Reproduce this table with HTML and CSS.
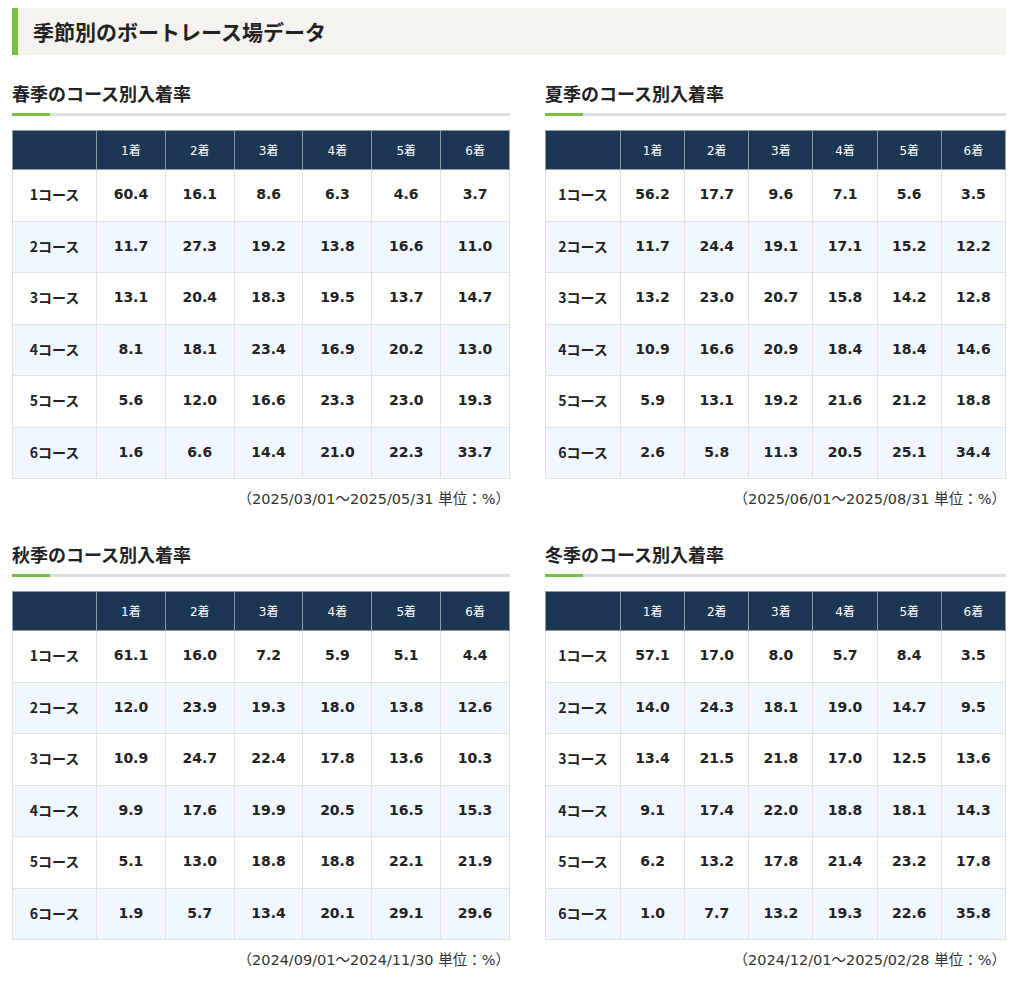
FILE: index.html
```html
<!DOCTYPE html>
<html lang="ja">
<head>
<meta charset="utf-8">
<link rel="stylesheet" href="styles.css">
</head>
<body>
<div class="page">
  <h2 class="page-title">季節別のボートレース場データ</h2>
  <div class="grid">
    <section class="season">
      <h3 class="season-title">春季のコース別入着率</h3>
      <table class="rate">
        <thead><tr><th></th><th>1着</th><th>2着</th><th>3着</th><th>4着</th><th>5着</th><th>6着</th></tr></thead>
        <tbody>
          <tr><td>1コース</td><td>60.4</td><td>16.1</td><td>8.6</td><td>6.3</td><td>4.6</td><td>3.7</td></tr>
          <tr><td>2コース</td><td>11.7</td><td>27.3</td><td>19.2</td><td>13.8</td><td>16.6</td><td>11.0</td></tr>
          <tr><td>3コース</td><td>13.1</td><td>20.4</td><td>18.3</td><td>19.5</td><td>13.7</td><td>14.7</td></tr>
          <tr><td>4コース</td><td>8.1</td><td>18.1</td><td>23.4</td><td>16.9</td><td>20.2</td><td>13.0</td></tr>
          <tr><td>5コース</td><td>5.6</td><td>12.0</td><td>16.6</td><td>23.3</td><td>23.0</td><td>19.3</td></tr>
          <tr><td>6コース</td><td>1.6</td><td>6.6</td><td>14.4</td><td>21.0</td><td>22.3</td><td>33.7</td></tr>
        </tbody>
      </table>
      <p class="note">（2025/03/01～2025/05/31 単位：%）</p>
    </section>
    <section class="season">
      <h3 class="season-title">夏季のコース別入着率</h3>
      <table class="rate">
        <thead><tr><th></th><th>1着</th><th>2着</th><th>3着</th><th>4着</th><th>5着</th><th>6着</th></tr></thead>
        <tbody>
          <tr><td>1コース</td><td>56.2</td><td>17.7</td><td>9.6</td><td>7.1</td><td>5.6</td><td>3.5</td></tr>
          <tr><td>2コース</td><td>11.7</td><td>24.4</td><td>19.1</td><td>17.1</td><td>15.2</td><td>12.2</td></tr>
          <tr><td>3コース</td><td>13.2</td><td>23.0</td><td>20.7</td><td>15.8</td><td>14.2</td><td>12.8</td></tr>
          <tr><td>4コース</td><td>10.9</td><td>16.6</td><td>20.9</td><td>18.4</td><td>18.4</td><td>14.6</td></tr>
          <tr><td>5コース</td><td>5.9</td><td>13.1</td><td>19.2</td><td>21.6</td><td>21.2</td><td>18.8</td></tr>
          <tr><td>6コース</td><td>2.6</td><td>5.8</td><td>11.3</td><td>20.5</td><td>25.1</td><td>34.4</td></tr>
        </tbody>
      </table>
      <p class="note">（2025/06/01～2025/08/31 単位：%）</p>
    </section>
    <section class="season">
      <h3 class="season-title">秋季のコース別入着率</h3>
      <table class="rate">
        <thead><tr><th></th><th>1着</th><th>2着</th><th>3着</th><th>4着</th><th>5着</th><th>6着</th></tr></thead>
        <tbody>
          <tr><td>1コース</td><td>61.1</td><td>16.0</td><td>7.2</td><td>5.9</td><td>5.1</td><td>4.4</td></tr>
          <tr><td>2コース</td><td>12.0</td><td>23.9</td><td>19.3</td><td>18.0</td><td>13.8</td><td>12.6</td></tr>
          <tr><td>3コース</td><td>10.9</td><td>24.7</td><td>22.4</td><td>17.8</td><td>13.6</td><td>10.3</td></tr>
          <tr><td>4コース</td><td>9.9</td><td>17.6</td><td>19.9</td><td>20.5</td><td>16.5</td><td>15.3</td></tr>
          <tr><td>5コース</td><td>5.1</td><td>13.0</td><td>18.8</td><td>18.8</td><td>22.1</td><td>21.9</td></tr>
          <tr><td>6コース</td><td>1.9</td><td>5.7</td><td>13.4</td><td>20.1</td><td>29.1</td><td>29.6</td></tr>
        </tbody>
      </table>
      <p class="note">（2024/09/01～2024/11/30 単位：%）</p>
    </section>
    <section class="season">
      <h3 class="season-title">冬季のコース別入着率</h3>
      <table class="rate">
        <thead><tr><th></th><th>1着</th><th>2着</th><th>3着</th><th>4着</th><th>5着</th><th>6着</th></tr></thead>
        <tbody>
          <tr><td>1コース</td><td>57.1</td><td>17.0</td><td>8.0</td><td>5.7</td><td>8.4</td><td>3.5</td></tr>
          <tr><td>2コース</td><td>14.0</td><td>24.3</td><td>18.1</td><td>19.0</td><td>14.7</td><td>9.5</td></tr>
          <tr><td>3コース</td><td>13.4</td><td>21.5</td><td>21.8</td><td>17.0</td><td>12.5</td><td>13.6</td></tr>
          <tr><td>4コース</td><td>9.1</td><td>17.4</td><td>22.0</td><td>18.8</td><td>18.1</td><td>14.3</td></tr>
          <tr><td>5コース</td><td>6.2</td><td>13.2</td><td>17.8</td><td>21.4</td><td>23.2</td><td>17.8</td></tr>
          <tr><td>6コース</td><td>1.0</td><td>7.7</td><td>13.2</td><td>19.3</td><td>22.6</td><td>35.8</td></tr>
        </tbody>
      </table>
      <p class="note">（2024/12/01～2025/02/28 単位：%）</p>
    </section>
  </div>
</div>
</body>
</html>
```
FILE: styles.css
```css
* { box-sizing: border-box; }
body {
  margin: 0;
  background: #fff;
  color: #222;
  font-family: "DejaVu Sans", "Noto Sans CJK JP", sans-serif;
}
.page {
  width: 994px;
  margin-left: 12px;
  padding-top: 8px;
}
.page-title {
  margin: 0;
  height: 47px;
  background: #f4f3ef;
  border-left: 6px solid #77c340;
  padding-left: 15px;
  font-family: "Noto Sans CJK JP", sans-serif;
  font-size: 21px;
  font-weight: bold;
  line-height: 47px;
  color: #222;
}
.grid {
  display: grid;
  grid-template-columns: 498px 461px;
  column-gap: 35px;
  row-gap: 32px;
  margin-top: 26px;
}
.season-title {
  position: relative;
  margin: 0;
  font-family: "Noto Sans CJK JP", sans-serif;
  font-size: 18px;
  font-weight: bold;
  line-height: 24px;
  padding-bottom: 8px;
  border-bottom: 3px solid #e0e0e0;
  color: #222;
}
.season-title::after {
  content: "";
  position: absolute;
  left: 0;
  bottom: -3px;
  width: 38px;
  height: 3px;
  background: #77c340;
}
.rate {
  width: 100%;
  margin-top: 14px;
  border-collapse: collapse;
  table-layout: fixed;
}
.rate th, .rate td {
  border: 1px solid #e2e2e2;
  text-align: center;
  padding: 0;
}
.rate th {
  height: 39px;
  background: #1c3753;
  color: #fff;
  font-size: 12px;
  font-weight: normal;
  border-color: #8e9aa6;
  padding-bottom: 2px;
}
.rate td {
  height: 51.5px;
  font-size: 14px;
  font-weight: bold;
  color: #222;
  padding-bottom: 2px;
}
.rate td:first-child {
  font-family: "Noto Sans CJK JP", sans-serif;
}
.rate th:first-child, .rate td:first-child { width: 84px; }
.season:nth-child(even) .rate th:first-child { width: 75px; }
.rate tbody tr:nth-child(even) td { background: #f0f7ff; }
.note {
  margin: 9px 0 0;
  text-align: right;
  font-size: 14.5px;
  line-height: 22px;
  color: #333;
}
```
